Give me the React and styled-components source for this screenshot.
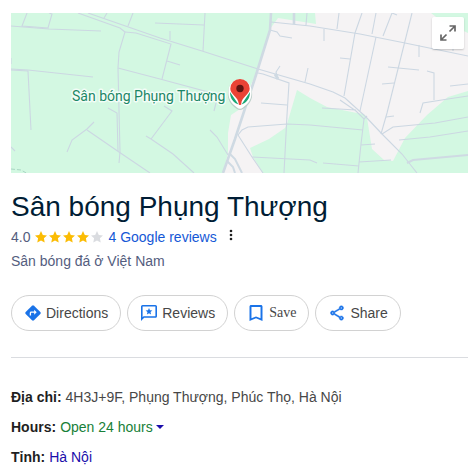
import React from 'react';
import styled, { createGlobalStyle } from 'styled-components';

const GlobalStyle = createGlobalStyle`
  * {
    box-sizing: border-box;
  }

  body {
    margin: 0;
    background: #fff;
    color: #474747;
    font-family: 'Liberation Sans', Arial, sans-serif;
    font-size: 14px;
  }
`;

const Panel = styled.main`
  padding: 13px 8px 0 11px;
`;

// Map preview
const MapFrame = styled.div`
  position: relative;
  overflow: hidden;
`;

const MapDrawing = styled.svg`
  display: block;
  width: 100%;
  height: auto;
`;

const MapLabel = styled.text`
  fill: #1c8766;
  stroke: #f2fdf7;
  stroke-width: 3px;
  stroke-linejoin: round;
  paint-order: stroke;
  font-family: Roboto, sans-serif;
  font-size: 14px;
`;

const ExpandButton = styled.button`
  position: absolute;
  top: 4px;
  right: 4px;
  display: flex;
  align-items: center;
  justify-content: center;
  width: 32px;
  height: 32px;
  padding: 0;
  border: 0;
  border-radius: 2px;
  background: rgba(255, 255, 255, 0.96);
  box-shadow: 0 1px 2px rgba(0, 0, 0, 0.2);
  cursor: pointer;
`;

// Heading block
const Title = styled.h1`
  margin: 16px 0 0;
  color: #001d35;
  font-size: 28px;
  font-weight: 400;
  line-height: 36px;
`;

const RatingRow = styled.div`
  display: flex;
  align-items: center;
  height: 24px;
  color: #545d7e;
`;

const Stars = styled.div`
  display: flex;
  gap: 2px;
  margin: 0 5px;
`;

const Star = styled.svg`
  width: 12px;
  height: 12px;
  fill: ${(props) => (props.$filled ? '#fbbc04' : '#dadce0')};
`;

const ReviewsLink = styled.a`
  color: #1558d6;
  text-decoration: none;
`;

const MoreButton = styled.button`
  display: flex;
  margin: 0 0 4px 12px;
  padding: 0;
  border: 0;
  background: none;
  color: #1f1f1f;
  cursor: pointer;
`;

const Category = styled.p`
  margin: 0;
  color: #545d7e;
  line-height: 24px;
`;

// Action buttons
const Actions = styled.div`
  display: flex;
  flex-wrap: wrap;
  gap: 6px;
  margin-top: 22px;
`;

const ActionButton = styled.button`
  display: flex;
  align-items: center;
  gap: 5px;
  height: 36px;
  padding: 0 12px 0 13px;
  border: 1px solid #d2d2d2;
  border-radius: 18px;
  background: #fff;
  color: #474747;
  font-family: ${(props) => (props.$serif ? "'Liberation Serif', serif" : 'inherit')};
  font-size: 14px;
  cursor: pointer;

  svg {
    width: 16px;
    height: 16px;
    fill: #1a73e8;
  }
`;

const Divider = styled.hr`
  margin: 26px 0 24px;
  border: 0;
  border-top: 1px solid #dadce0;
`;

// Place details
const Details = styled.dl`
  margin: 0;
  line-height: 30px;
`;

const Detail = styled.div`
  display: flex;
  gap: 4px;
`;

const DetailName = styled.dt`
  color: #1f1f1f;
  font-weight: 700;
`;

const DetailValue = styled.dd`
  margin: 0;
`;

const HoursButton = styled.button`
  display: flex;
  align-items: center;
  gap: 3px;
  padding: 0;
  border: 0;
  background: none;
  color: #188038;
  font: inherit;
  cursor: pointer;

  &::after {
    content: '';
    border: 4px solid transparent;
    border-top-color: #1a0dab;
    border-bottom: 0;
  }
`;

const ProvinceLink = styled.a`
  color: #1a0dab;
  text-decoration: none;
`;

const minorRoads = [
  'M11 26 L49 29 L101 31',
  'M27 13 L22 26 L48 28 L52 14 L49 13',
  'M11 69 L28 70 L93 77',
  'M11 70 L28 71 L31 130',
  'M11 58 V64',
  'M11 147 L15 151',
  'M78 13 L120 28 L125 32 L119 52 L118 68 L120 152 L119 163',
  'M88 13 L160 38 L202 51 L258 69 L310 84',
  'M107 13 L104 18',
  'M133 13 L128 26',
  'M125 32 L136 33 L171 44 L162 79 M167 61 L180 65',
  'M118 68 L160 79 L212 93 L208 96',
  'M108 108 L117 113 L118 151',
  'M94 122 L87 129 L72 140 L67 152',
  'M87 130 L119 152 L150 173',
  'M155 23 L204 25 M205 13 L203 51',
  'M170 31 V40',
  'M164 106 L172 111 L151 139 L146 136 M151 139 L173 154 L194 173',
  'M210 130 L217 137 L228 155',
  'M217 99 L214 111',
  'M271 22 L310 26 L360 34 L405 43 L468 56',
  'M307 13 L306 25',
  'M270 30 L277 32 L280 36 L292 38',
  'M258 73 L263 74 L289 83 L287 115 L284 173',
  'M280 66 L276 72 L278 79 M308 68 L305 82',
  'M261 103 L287 105',
  'M238 135 L242 130 L248 127 L287 124 L310 125 L363 130',
  'M238 135 L252 157 L263 173',
  'M252 157 L310 160 L317 163 M323 163 L359 166',
  'M310 84 L333 92 L345 98 L366 117 L382 134 L402 154 L417 173',
  'M339 13 L337 29 M324 29 V41',
  'M362 13 L355 33 L344 96 M340 58 L350 59',
  'M376 13 L372 34',
  'M397 15 L392 13 L383 36',
  'M376 37 L360 111',
  'M412 13 L398 69 L387 113 L381 134',
  'M388 67 L419 70 M427 71 L434 73 V100',
  'M419 45 V57 M453 42 V51',
  'M382 84 L394 83 M386 117 L394 116',
  'M450 86 L468 84',
  'M420 113 L423 103 L448 99 L468 96',
  'M382 134 L393 127 L435 123 L468 117',
  'M399 140 L430 137 L468 131',
  'M340 100 L356 111 L364 119 L367 116 M322 108 L356 110',
  'M364 119 L361 144 L358 173 M361 145 L375 144 M359 162 L391 160',
];

const starPath = 'M6 0 L7.8 3.9 L12 4.4 L8.9 7.3 L9.7 11.5 L6 9.4 L2.3 11.5 L3.1 7.3 L0 4.4 L4.2 3.9 Z';

const MapPreview = () => (
  <MapFrame>
    <MapDrawing viewBox="11 13 457 160" role="img" aria-label="Map of Sân bóng Phụng Thượng">
      <path fill="#d3f8e2" d="M11 13 H468 V173 H11 Z" />
      <path
        fill="#f5f3f4"
        d="M278 18 L310 23 L316 24 L315 13 H431 L440 20 L468 33 V91 L448 97 L427 115 L405 138 L393 161 L384 160 L372 149 L367 118 L364 114 L357 113 L327 107 L310 98 L297 90 L287 124 L285 128 L269 139 L250 148 L253 157 L263 173 H223 L228 153 V133 L231 115 L240 109 L258 69 L270 29 Z"
      />
      <g fill="none" stroke="#ccd7e2" strokeWidth="1.1">
        {minorRoads.map((d) => (
          <path key={d} d={d} />
        ))}
      </g>
      <path fill="none" stroke="#a8d5c2" strokeDasharray="4 2" d="M11 169 L21 170 L28 174" />
      <g fill="none" stroke="#cfdae3" strokeWidth="2.6">
        <path d="M271 13 L270 30 L256 75 L235 139 L223 173" />
        <path d="M229 153 L235 159 L242 173 M227 161 L233 167 L235 173" strokeWidth="2" />
        <path d="M294 13 V24" />
        <path d="M407 163 L413 160 L468 155" strokeWidth="2" />
        <path d="M275 74 L278 79" strokeWidth="3" />
      </g>
      <MapLabel x="72" y="101">Sân bóng Phụng Thượng</MapLabel>
      {/* Place badge with the pin over it */}
      <path fill="#bccfc9" d="M228 92 A12 12 0 0 1 252 92 C253 100 249 105 243 109 Q240 111 237 109 C231 105 227 100 228 92 Z" />
      <path fill="#fff" d="M228.5 91 A11.5 11.5 0 0 1 251.5 91 C252 99 249 103 243 107.5 Q240 110 237 107.5 C231 103 228 99 228.5 91 Z" />
      <path fill="#1ca776" d="M230 92 L238.5 104.5 C234 103 230 99 230 92 Z M250 92 L241.5 104.5 C246 103 250 99 250 92 Z" />
      <path
        fill="#ea4335"
        d="M240 79 A9.7 9.7 0 0 0 230.3 88.7 C230.3 94.5 238.6 97 238.8 104.2 Q240 106 241.2 104.2 C241.4 97 249.7 94.5 249.7 88.7 A9.7 9.7 0 0 0 240 79 Z"
      />
      <circle cx="240" cy="88.5" r="3.7" fill="#611411" />
    </MapDrawing>
    <ExpandButton aria-label="Expand map">
      <svg width="16" height="16" viewBox="0 0 16 16" fill="none" stroke="#666" strokeWidth="1.7">
        <path d="M9.5 1 H15 V6.5 M15 1 L9.5 6.5 M1 9.5 V15 H6.5 M1 15 L6.5 9.5" />
      </svg>
    </ExpandButton>
  </MapFrame>
);

const App = () => {
  return (
    <>
      <GlobalStyle />
      <Panel>
        <MapPreview />
        <Title>Sân bóng Phụng Thượng</Title>
        <RatingRow>
          4.0
          <Stars role="img" aria-label="4 out of 5 stars">
            {[1, 2, 3, 4, 5].map((n) => (
              <Star key={n} $filled={n <= 4} viewBox="0 0 12 12">
                <path d={starPath} />
              </Star>
            ))}
          </Stars>
          <ReviewsLink href="#reviews">4 Google reviews</ReviewsLink>
          <MoreButton aria-label="More options">
            <svg width="4" height="12" viewBox="0 0 4 12" fill="currentColor">
              <circle cx="2" cy="2" r="1.3" />
              <circle cx="2" cy="6" r="1.3" />
              <circle cx="2" cy="10" r="1.3" />
            </svg>
          </MoreButton>
        </RatingRow>
        <Category>Sân bóng đá ở Việt Nam</Category>

        <Actions>
          <ActionButton>
            <svg viewBox="0 0 16 16">
              <path d="M7 0.7 Q8 -0.2 9 0.7 L15.3 7 Q16.2 8 15.3 9 L9 15.3 Q8 16.2 7 15.3 L0.7 9 Q-0.2 8 0.7 7 Z" />
              <path fill="none" stroke="#fff" strokeWidth="1.3" d="M5.4 10.4 V8 Q5.4 7.2 6.2 7.2 H10" />
              <path fill="#fff" d="M9.2 4.7 L11.7 7.2 L9.2 9.7 Z" />
            </svg>
            Directions
          </ActionButton>
          <ActionButton>
            <svg viewBox="2 2 20 20">
              <path d="M20 2 H4 c-1.1 0-2 .9-2 2 v18 l4-4 h14 c1.1 0 2-.9 2-2 V4 c0-1.1-.9-2-2-2z m0 14 H5.2 L4 17.2 V4 h16z" />
              <path d="M12 5.6 l1.2 2.9 3 .3 -2.300 2 .7 3 -2.600-1.600 -2.600 1.600 .7-3 -2.300-2 3-.3z" />
            </svg>
            Reviews
          </ActionButton>
          <ActionButton $serif>
            <svg viewBox="3 3 18 18">
              <path d="M17.500 3 H6.500 c-1 0-1.800.8-1.800 1.800 V21 L12 18 L19.300 21 V4.800 c0-1-.8-1.800-1.800-1.800z M17.100 17.900 L12 15.800 L6.900 17.900 V5.200 H17.100z" />
            </svg>
            Save
          </ActionButton>
          <ActionButton>
            <svg viewBox="1 1 22 22">
              <path
                stroke="#1a73e8"
                strokeWidth="0.5"
                d="M18 16 c-.8 0-1.5.3-2 .8 l-7.1-4.2 c.1-.2.1-.4.1-.6 s0-.5-.1-.7 L16 7.2 c.5.5 1.2.8 2 .8 1.7 0 3-1.3 3-3 s-1.3-3-3-3 -3 1.3-3 3 c0 .2 0 .5.1.7 L8 9.8 C7.5 9.3 6.8 9 6 9 c-1.7 0-3 1.3-3 3 s1.3 3 3 3 c.8 0 1.5-.3 2-.8 l7.1 4.2 c-.1.2-.1.4-.1.6 0 1.7 1.3 3 3 3 s3-1.3 3-3 -1.3-3-3-3z M18 4 a1 1 0 1 1 0 2 a1 1 0 0 1 0-2z M6 13 a1 1 0 1 1 0-2 a1 1 0 0 1 0 2z M18 20 a1 1 0 1 1 0-2 a1 1 0 0 1 0 2z"
              />
            </svg>
            Share
          </ActionButton>
        </Actions>

        <Divider />

        <Details>
          <Detail>
            <DetailName>Địa chỉ:</DetailName>
            <DetailValue>4H3J+9F, Phụng Thượng, Phúc Thọ, Hà Nội</DetailValue>
          </Detail>
          <Detail>
            <DetailName>Hours:</DetailName>
            <DetailValue>
              <HoursButton>Open 24 hours</HoursButton>
            </DetailValue>
          </Detail>
          <Detail>
            <DetailName>Tỉnh:</DetailName>
            <DetailValue>
              <ProvinceLink href="#ha-noi">Hà Nội</ProvinceLink>
            </DetailValue>
          </Detail>
        </Details>
      </Panel>
    </>
  );
};

export default App;
